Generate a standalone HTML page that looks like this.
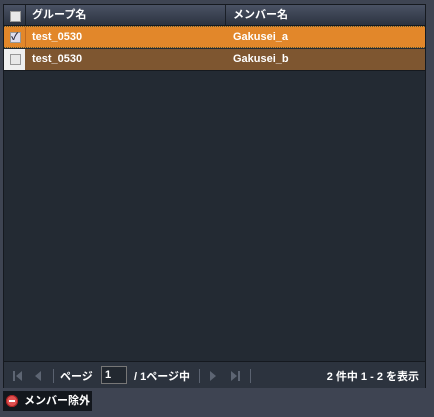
<!DOCTYPE html>
<html><head><meta charset="utf-8"><style>
body{margin:0;width:434px;height:417px;background:#3e4452;font-family:"Liberation Sans","Noto Sans CJK JP",sans-serif;font-size:11px;font-weight:bold;color:#fff;position:relative;overflow:hidden}
.grid{position:absolute;left:3px;top:4px;width:423px;height:384px;background:#232a33;border:1px solid #15191f;box-sizing:border-box}
.hdr{position:absolute;left:0;top:0;width:100%;height:20px;background:linear-gradient(#4a5264,#2c3340);border-bottom:1px solid #15191f}
.cell{position:absolute;height:100%;line-height:20px}
.cb{position:absolute;width:9px;height:9px;background:#e8e8e8;border:1px solid #999;}
.row{position:absolute;left:0;width:100%;height:21px;line-height:21px}
.tb{position:absolute;left:0;top:356px;width:100%;height:26px;background:#2c333e;border-top:1px solid #15191f}
.sep{position:absolute;top:7px;width:1px;height:14px;background:#5a6270}
.tl{position:absolute;top:9px;width:0;height:0;border-top:5px solid transparent;border-bottom:5px solid transparent;border-right:6px solid #5d6573}
.tr{position:absolute;top:9px;width:0;height:0;border-top:5px solid transparent;border-bottom:5px solid transparent;border-left:6px solid #5d6573}
.bar{position:absolute;top:9px;width:2px;height:10px;background:#5d6573}
</style></head><body>
<div class="grid">
 <div class="hdr">
  <div class="cb" style="left:6px;top:6px"></div>
  <div style="position:absolute;left:21px;top:0;width:1px;height:20px;background:#1a1f27"></div>
  <div class="cell" style="left:28px">グループ名</div>
  <div style="position:absolute;left:221px;top:0;width:1px;height:20px;background:#1a1f27"></div>
  <div class="cell" style="left:229px">メンバー名</div>
 </div>
 <div class="row" style="top:21px;background:#e2872a;border-top:1px dotted #553;border-bottom:1px dotted #553;height:20px">
  <div class="cb" style="left:6px;top:5px;background:#dde"><span style="position:absolute;left:0;top:-6px;color:#334;font-size:10px">✓</span></div>
  <div style="position:absolute;left:0;top:0;width:21px;height:100%;border-right:1px solid #c06a20"></div>
  <span style="position:absolute;left:28px">test_0530</span>
  <span style="position:absolute;left:229px">Gakusei_a</span>
 </div>
 <div class="row" style="top:44px;background:#7e5630;border-bottom:1px solid #15191f">
  <div style="position:absolute;left:0;top:0;width:21px;height:100%;background:#efefef"></div>
  <div class="cb" style="left:6px;top:5px"></div>
  <span style="position:absolute;left:28px">test_0530</span>
  <span style="position:absolute;left:229px">Gakusei_b</span>
 </div>
 <div class="tb">
  <div class="bar" style="left:9px"></div><div class="tl" style="left:12px"></div>
  <div class="tl" style="left:31px"></div>
  <div class="sep" style="left:49px"></div>
  <span style="position:absolute;left:56px;top:6px">ページ</span>
  <div style="position:absolute;left:97px;top:4px;width:26px;height:18px;background:#222830;border:1px solid #777;box-sizing:border-box;line-height:16px;padding-left:3px">1</div>
  <span style="position:absolute;left:130px;top:6px">/ 1ページ中</span>
  <div class="sep" style="left:195px"></div>
  <div class="tr" style="left:206px"></div>
  <div class="tr" style="left:227px"></div><div class="bar" style="left:234px"></div>
  <div class="sep" style="left:246px"></div>
  <span style="position:absolute;right:6px;top:6px">2 件中 1 - 2 を表示</span>
 </div>
</div>
<div style="position:absolute;left:3px;top:391px;width:89px;height:20px;background:#13171d;line-height:20px">
 <div style="position:absolute;left:3px;top:4px;width:12px;height:12px;border-radius:50%;background:#e05050;box-shadow:inset 0 0 0 1px #a22"><div style="position:absolute;left:3px;top:5px;width:6px;height:2px;background:#fff"></div></div>
 <span style="position:absolute;left:21px">メンバー除外</span>
</div>
</body></html>
